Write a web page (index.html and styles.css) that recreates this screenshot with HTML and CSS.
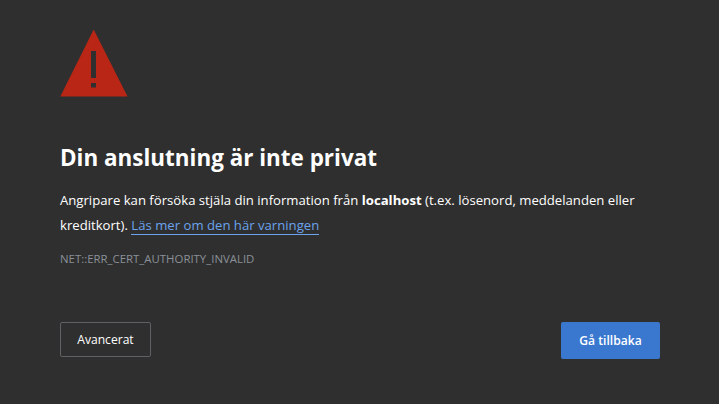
FILE: index.html
```
<!DOCTYPE html>
<html lang="sv">
<head>
<meta charset="utf-8">
<title>Sekretessfel</title>
<link rel="stylesheet" href="styles.css">
</head>
<body>
<main class="page">
  <svg class="icon" width="68" height="68" viewBox="0 0 68 68" aria-hidden="true">
    <path fill="#b92616" d="M33.7 0.5 67.5 67.5H0.3Z"/>
    <path fill="#2f2f2f" d="M31 22h5v27h-5zM31 54h5v4.500h-5z"/>
  </svg>
  <h1 class="title">Din anslutning är inte privat</h1>
  <p class="text">Angripare kan försöka stjäla din information från <strong>localhost</strong> (t.ex. lösenord, meddelanden eller kreditkort). <a class="link" href="#">Läs mer om den här varningen</a></p>
  <p class="code">NET::ERR_CERT_AUTHORITY_INVALID</p>
  <div class="actions">
    <button class="btn btn-secondary">Avancerat</button>
    <button class="btn btn-primary">Gå tillbaka</button>
  </div>
</main>
</body>
</html>
```
FILE: styles.css
```
* { box-sizing: border-box; }
html, body { margin: 0; height: 100%; }
body {
  background: #2f2f2f;
  color: #fff;
  font-family: "Open Sans", "Noto Sans", sans-serif;
  overflow: hidden;
}
.page {
  display: flex;
  flex-direction: column;
  height: 404px;
  padding: 29px 59px 0 60px;
}
.icon { display: block; flex: none; }
.title {
  margin: 46px 0 0;
  font-size: 22.450px;
  line-height: 30px;
  font-weight: 700;
}
.text {
  margin: 15px 0 0;
  font-size: 13.150px;
  line-height: 25px;
}
.text strong { font-weight: 700; }
.link {
  color: #6ba3ec;
  text-decoration: none;
  border-bottom: 1px solid #6ba3ec;
}
.code {
  margin: 13px 0 0;
  font-size: 11.400px;
  line-height: 16px;
  color: #8a9097;
}
.actions {
  display: flex;
  justify-content: space-between;
  align-items: flex-start;
  margin-top: 55px;
}
.btn {
  font-family: inherit;
  font-size: 12.100px;
  border-radius: 2px;
  color: #fff;
  padding: 0;
}
.btn-secondary {
  width: 91px;
  height: 35px;
  background: transparent;
  border: 1px solid #5f6164;
}
.btn-primary {
  width: 99px;
  height: 37px;
  background: #3a78d0;
  border: 0;
  font-weight: 600;
}
```
